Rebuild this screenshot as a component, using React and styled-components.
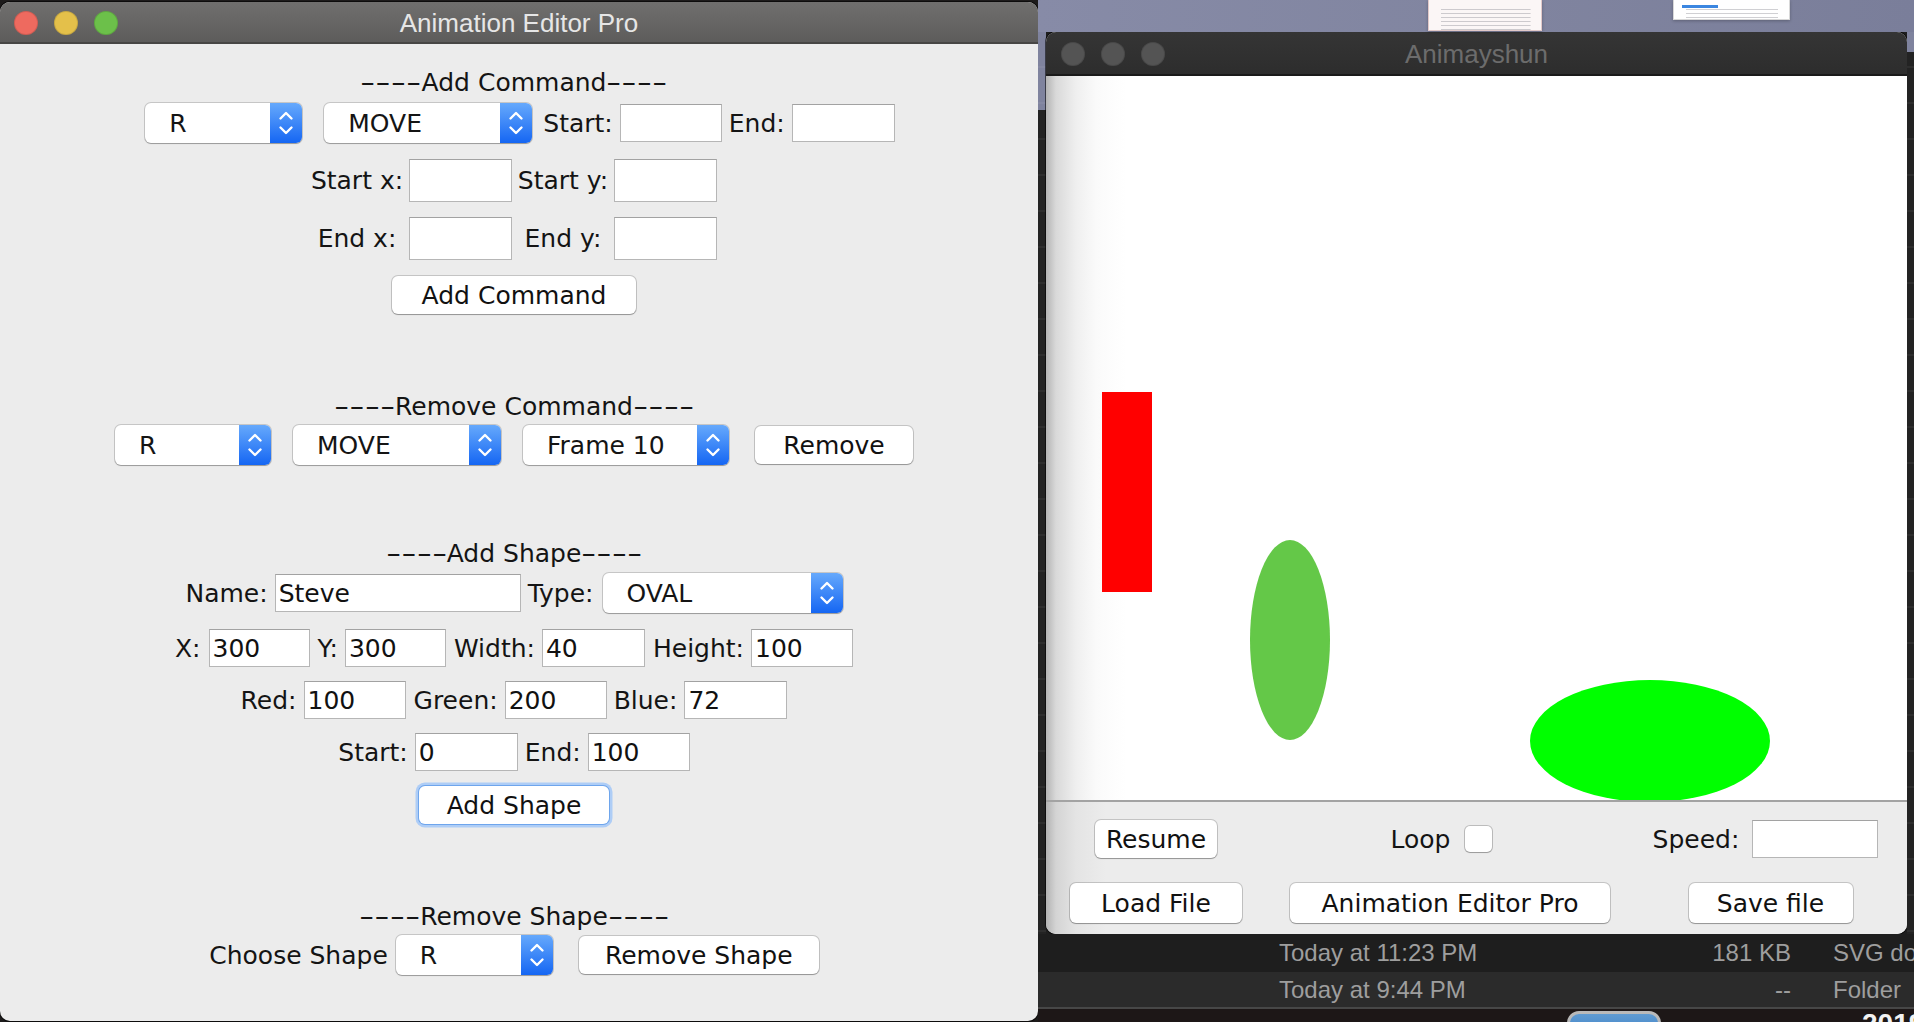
import React from "react";
import styled, { createGlobalStyle } from "styled-components";

const GlobalStyle = createGlobalStyle`
  *, *::before, *::after { box-sizing: border-box; }
  html, body { margin: 0; padding: 0; background: #1d1b1b; }
  body { width: 1914px; height: 1022px; overflow: hidden; font-family: "DejaVu Sans", Verdana, sans-serif; }
`;

const Screen = styled.div`
  width: 1914px;
  height: 1022px;
  display: flex;
  overflow: hidden;
  background: #1d1b1b;
`;

/* ---------- window chrome ---------- */
const Window = styled.div`
  flex: none;
  width: ${(p) => p.$w}px;
  height: ${(p) => p.$h}px;
  margin-top: ${(p) => p.$mt || 0}px;
  display: flex;
  flex-direction: column;
  border-radius: 10px;
  overflow: hidden;
  background: #ececec;
  box-shadow: 0 0 0 1px rgba(0, 0, 0, 0.55);
`;

const TitleBar = styled.div`
  flex: none;
  height: ${(p) => p.$h}px;
  padding-top: 2px;
  display: grid;
  grid-template-columns: 1fr auto 1fr;
  align-items: center;
  background: ${(p) =>
    p.$inactive ? "linear-gradient(#353535, #2d2d2d)" : "linear-gradient(#706f6e, #5d5c5b)"};
  border-bottom: 2px solid ${(p) => (p.$inactive ? "#1a1a1a" : "#474645")};
  font-family: "Liberation Sans", Arial, sans-serif;
  font-size: 26px;
  color: ${(p) => (p.$inactive ? "#6c6c6c" : "#e6e6e6")};
  white-space: nowrap;
`;

const Lights = styled.div`
  display: flex;
  gap: 16px;
  padding-left: ${(p) => p.$pl}px;
`;

const Light = styled.span`
  width: 24px;
  height: 24px;
  border-radius: 50%;
  background: ${(p) => p.$c};
  box-shadow: inset 0 0 0 1px rgba(0, 0, 0, 0.12);
`;

/* ---------- editor pane ---------- */
const Pane = styled.div`
  flex: 1;
  display: flex;
  flex-direction: column;
  align-items: center;
  padding-right: 10px;
  font-family: "DejaVu Sans", Verdana, sans-serif;
  font-size: 25px;
  color: #141414;
`;

const Heading = styled.div`
  margin-top: ${(p) => p.$mt}px;
  height: 30px;
  line-height: 30px;
  white-space: nowrap;
`;

const Dashes = styled.span`
  display: inline-block;
  transform: scaleX(1.7);
  transform-origin: left center;
  margin-right: 25px;
`;

const Row = styled.div`
  margin-top: ${(p) => p.$mt}px;
  height: ${(p) => p.$h || 38}px;
  display: flex;
  align-items: center;
  justify-content: center;
  gap: 7px;
`;

const Label = styled.span`
  flex: none;
  white-space: nowrap;
  margin-left: ${(p) => p.$ml || 0}px;
  line-height: 1;
`;

const Field = styled.input.attrs({ readOnly: true, type: "text" })`
  flex: none;
  width: ${(p) => p.$w || 102}px;
  height: ${(p) => p.$h || 38}px;
  margin: 0 0 0 ${(p) => p.$ml || 0}px;
  padding: 0 0 0 3px;
  border: 1px solid #b6b6b6;
  border-top-color: #a2a2a2;
  border-radius: 0;
  background: #fff;
  font: inherit;
  color: #111;
  outline: none;
`;

const FieldGrid = styled.div`
  margin-top: 16px;
  display: grid;
  grid-template-columns: 92px 103px 90px 103px;
  grid-auto-rows: 43px;
  column-gap: 6px;
  row-gap: 15px;
  align-items: center;
  justify-items: center;
`;

const SelectBox = styled.div`
  flex: none;
  width: ${(p) => p.$w}px;
  height: 40px;
  margin-left: ${(p) => p.$ml || 0}px;
  display: flex;
  background: #fff;
  border-radius: 6px;
  overflow: hidden;
  box-shadow: 0 0 0 1px rgba(0, 0, 0, 0.16), 0 1px 1px rgba(0, 0, 0, 0.22);
`;

const SelectValue = styled.span`
  flex: 1;
  padding-left: 24px;
  display: flex;
  align-items: center;
  white-space: nowrap;
`;

const SelectArrow = styled.span`
  flex: none;
  width: 32px;
  display: flex;
  align-items: center;
  justify-content: center;
  background: linear-gradient(#66a9fc, #1566f3);
`;

const PushButton = styled.button`
  flex: none;
  width: ${(p) => p.$w}px;
  height: ${(p) => p.$h || 38}px;
  margin: ${(p) => p.$mt || 0}px 0 0 ${(p) => p.$ml || 0}px;
  padding: 0;
  border: none;
  border-radius: 6px;
  background: #fff;
  box-shadow: ${(p) =>
    p.$focus
      ? "0 0 0 1px #6ea5ec, 0 0 0 3.5px #aecdf6"
      : "0 0 0 1px rgba(0,0,0,0.17), 0 1px 1px rgba(0,0,0,0.24)"};
  font: inherit;
  color: #111;
  white-space: nowrap;
`;

function Combo({ w, ml, children }) {
  return (
    <SelectBox $w={w} $ml={ml}>
      <SelectValue>{children}</SelectValue>
      <SelectArrow>
        <svg width="32" height="40" viewBox="0 0 32 40">
          <path d="M10.5 15.5 L16 10 L21.5 15.5" fill="none" stroke="#fff" strokeWidth="2.4" strokeLinecap="round" strokeLinejoin="round" />
          <path d="M10.5 24.5 L16 30 L21.5 24.5" fill="none" stroke="#fff" strokeWidth="2.4" strokeLinecap="round" strokeLinejoin="round" />
        </svg>
      </SelectArrow>
    </SelectBox>
  );
}

function Title({ mt, children }) {
  return (
    <Heading $mt={mt}>
      <Dashes>----</Dashes>
      {children}
      <Dashes>----</Dashes>
    </Heading>
  );
}

/* ---------- right side: desktop, finder, player window ---------- */
const RightArea = styled.div`
  flex: none;
  width: 876px;
  height: 1022px;
  display: flex;
  flex-direction: column;
  background: #1e1e1e;
`;

const Desktop = styled.div`
  flex: none;
  height: 32px;
  position: relative;
  background: linear-gradient(90deg, #878ba7, #80849f 55%, #7a7e9a);
`;

const Thumb = styled.div`
  position: absolute;
  top: 0;
  left: ${(p) => p.$x}px;
  width: ${(p) => p.$w}px;
  height: ${(p) => p.$h}px;
  background:
    repeating-linear-gradient(180deg, transparent 0 3px, rgba(120,120,130,0.35) 3px 4px) 12px 6px / 80% 100% no-repeat,
    ${(p) => p.$bg};
  border: 1px solid ${(p) => p.$bd};
  border-top: none;
  box-shadow: 0 1px 3px rgba(0, 0, 0, 0.25);
`;

const ThumbBar = styled.div`
  position: absolute;
  left: 8px;
  top: 5px;
  width: 36px;
  height: 3px;
  background: #3b86e0;
`;

const WindowRow = styled.div`
  flex: none;
  height: 902px;
  display: flex;
`;

const Sliver = styled.div`
  flex: none;
  width: ${(p) => p.$w}px;
  background:
    repeating-linear-gradient(180deg, transparent 0 34px, rgba(255,255,255,0.05) 34px 36px),
    linear-gradient(#7f839e 0, #7f839e ${(p) => p.$blue}px, #232323 ${(p) => p.$blue}px);
`;

const Canvas = styled.div`
  flex: none;
  height: 724px;
  background: linear-gradient(90deg, #b4b4b4 0, #d9d9d9 10px, #efefef 30px, #fafafa 50px, #fff 80px);
`;

const ControlPanel = styled.div`
  flex: 1;
  border-top: 2px solid #a3a3a3;
  padding-top: 17px;
  display: grid;
  grid-template-columns: 220px 368px 1fr;
  grid-template-rows: 40px 40px;
  row-gap: 24px;
  align-items: center;
  justify-items: center;
  background: linear-gradient(90deg, #b3b3b3 0, #d4d4d4 10px, #e4e4e4 30px, #ececec 60px);
  font-family: "DejaVu Sans", Verdana, sans-serif;
  font-size: 25px;
  color: #141414;
`;

const LoopGroup = styled.div`
  display: flex;
  align-items: center;
  gap: 15px;
  margin-right: 17px;
`;

const SpeedGroup = styled.div`
  display: flex;
  align-items: center;
  gap: 13px;
  margin-right: 10px;
`;

const CheckBox = styled.span`
  width: 27px;
  height: 26px;
  border-radius: 5px;
  background: #fff;
  box-shadow: 0 0 0 1px rgba(0, 0, 0, 0.2), 0 1px 1px rgba(0, 0, 0, 0.18);
`;

const FinderRow = styled.div`
  flex: none;
  height: ${(p) => p.$h}px;
  background: ${(p) => p.$bg};
  display: grid;
  grid-template-columns: 430px 82px 1fr;
  align-items: center;
  padding-left: 241px;
  font-family: "Liberation Sans", Arial, sans-serif;
  font-size: 24px;
  color: #9e9e9e;
  white-space: nowrap;
  overflow: hidden;
`;

const SizeCell = styled.span`
  text-align: right;
`;

const KindCell = styled.span`
  padding-left: 42px;
`;

const Divider = styled.div`
  flex: none;
  height: 2px;
  background: #474747;
`;

const DesktopBottom = styled.div`
  flex: 1;
  display: flex;
  align-items: flex-start;
  overflow: hidden;
  background: #1d1717;
`;

const DockIcon = styled.div`
  flex: none;
  margin: 2px 0 0 529px;
  width: 94px;
  height: 30px;
  border: 3px solid #b9b9b9;
  border-radius: 12px 12px 0 0;
  background: linear-gradient(#5f9bd2, #3d7fc4);
`;

const YearText = styled.span`
  margin: 1px 0 0 201px;
  font-family: "Liberation Sans", Arial, sans-serif;
  font-weight: bold;
  font-size: 28px;
  line-height: 1;
  color: #f2f2f2;
`;

export default function App() {
  return (
    <>
      <GlobalStyle />
      <Screen>
        <Window $w={1038} $h={1019} $mt={2}>
          <TitleBar $h={42}>
            <Lights $pl={14}>
              <Light $c="#ee6a5f" />
              <Light $c="#e4c04a" />
              <Light $c="#6cc04a" />
            </Lights>
            <span>Animation Editor Pro</span>
            <span />
          </TitleBar>
          <Pane>
            <Title mt={24}>Add Command</Title>
            <Row $mt={5} $h={40}>
              <Combo w={157} ml={12}>R</Combo>
              <Combo w={208} ml={15}>MOVE</Combo>
              <Label $ml={4}>Start:</Label>
              <Field $w={102} />
              <Label>End:</Label>
              <Field $w={103} />
            </Row>
            <FieldGrid>
              <Label>Start x:</Label>
              <Field $w={103} $h={43} />
              <Label>Start y:</Label>
              <Field $w={103} $h={43} />
              <Label>End x:</Label>
              <Field $w={103} $h={43} />
              <Label>End y:</Label>
              <Field $w={103} $h={43} />
            </FieldGrid>
            <PushButton $w={244} $mt={16}>Add Command</PushButton>

            <Title mt={78}>Remove Command</Title>
            <Row $mt={3} $h={40}>
              <Combo w={156}>R</Combo>
              <Combo w={208} ml={15}>MOVE</Combo>
              <Combo w={206} ml={15}>Frame 10</Combo>
              <PushButton $w={158} $ml={19}>Remove</PushButton>
            </Row>

            <Title mt={74}>Add Shape</Title>
            <Row $mt={4} $h={40}>
              <Label>Name:</Label>
              <Field $w={246} value="Steve" />
              <Label>Type:</Label>
              <Combo w={240} ml={2}>OVAL</Combo>
            </Row>
            <Row $mt={16}>
              <Label>X:</Label>
              <Field $w={101} $ml={1} value="300" />
              <Label $ml={1}>Y:</Label>
              <Field $w={101} value="300" />
              <Label $ml={1}>Width:</Label>
              <Field $w={103} value="40" />
              <Label $ml={1}>Height:</Label>
              <Field $w={102} value="100" />
            </Row>
            <Row $mt={14}>
              <Label>Red:</Label>
              <Field $w={102} value="100" />
              <Label $ml={1}>Green:</Label>
              <Field $w={102} value="200" />
              <Label>Blue:</Label>
              <Field $w={103} value="72" />
            </Row>
            <Row $mt={14}>
              <Label>Start:</Label>
              <Field $w={103} value="0" />
              <Label>End:</Label>
              <Field $w={102} value="100" />
            </Row>
            <PushButton $w={190} $mt={15} $focus>Add Shape</PushButton>

            <Title mt={78}>Remove Shape</Title>
            <Row $mt={3} $h={40}>
              <Label>Choose Shape</Label>
              <Combo w={157} ml={1}>R</Combo>
              <PushButton $w={240} $ml={19}>Remove Shape</PushButton>
            </Row>
          </Pane>
        </Window>

        <RightArea>
          <Desktop>
            <Thumb $x={390} $w={114} $h={31} $bg="#fbf6f6" $bd="#e2c9c9" />
            <Thumb $x={635} $w={117} $h={20} $bg="#ffffff" $bd="#d8d8d8">
              <ThumbBar />
            </Thumb>
          </Desktop>
          <WindowRow>
            <Sliver $w={8} $blue={78} />
            <Window $w={861} $h={902}>
              <TitleBar $inactive $h={44}>
                <Lights $pl={15}>
                  <Light $c="#545454" />
                  <Light $c="#545454" />
                  <Light $c="#545454" />
                </Lights>
                <span>Animayshun</span>
                <span />
              </TitleBar>
              <Canvas>
                <svg width="861" height="724" viewBox="0 0 861 724">
                  <rect x="56" y="316" width="50" height="200" fill="#ff0000" />
                  <ellipse cx="244" cy="564" rx="40" ry="100" fill="#64c848" />
                  <ellipse cx="604" cy="665" rx="120" ry="61" fill="#00ff00" />
                </svg>
              </Canvas>
              <ControlPanel>
                <PushButton $w={122}>Resume</PushButton>
                <LoopGroup>
                  <Label>Loop</Label>
                  <CheckBox />
                </LoopGroup>
                <SpeedGroup>
                  <Label>Speed:</Label>
                  <Field $w={126} />
                </SpeedGroup>
                <PushButton $w={172} $h={40}>Load File</PushButton>
                <PushButton $w={320} $h={40}>Animation Editor Pro</PushButton>
                <PushButton $w={164} $h={40}>Save file</PushButton>
              </ControlPanel>
            </Window>
            <Sliver $w={7} $blue={20} />
          </WindowRow>
          <FinderRow $h={38} $bg="#1e1e1e">
            <span>Today at 11:23 PM</span>
            <SizeCell>181 KB</SizeCell>
            <KindCell>SVG document</KindCell>
          </FinderRow>
          <FinderRow $h={35} $bg="#2b2b2b">
            <span>Today at 9:44 PM</span>
            <SizeCell>--</SizeCell>
            <KindCell>Folder</KindCell>
          </FinderRow>
          <Divider />
          <DesktopBottom>
            <DockIcon />
            <YearText>2019</YearText>
          </DesktopBottom>
        </RightArea>
      </Screen>
    </>
  );
}
